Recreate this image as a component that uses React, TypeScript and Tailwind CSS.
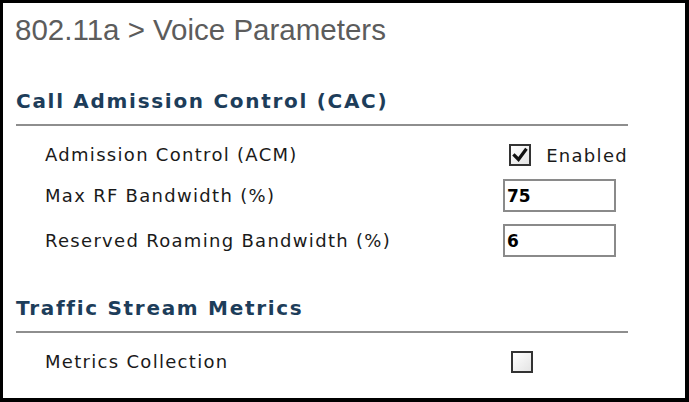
const heading = "font-['DejaVu_Sans',sans-serif] text-[20px] font-bold leading-[22px] tracking-[1.7px] text-[#1d3d5a]";
const label = "w-[458px] font-['DejaVu_Sans',sans-serif] text-[18px] leading-[22px] tracking-[1.3px] text-[#1a1a1a]";

function Box({ checked }: { checked?: boolean }) {
  return (
    <div className="ml-[8px] flex h-[22px] w-[22px] items-center justify-center border-2 border-[#333] bg-gradient-to-br from-white to-[#e4e4e4]">
      {checked && (
        <svg viewBox="0 0 16 16" className="h-[16px] w-[16px]">
          <path d="M2.5 8.5 L6.5 12.5 L13.5 3" fill="none" stroke="#111" strokeWidth="3.2" strokeLinecap="square" />
        </svg>
      )}
    </div>
  );
}

function Field({ value }: { value: string }) {
  return (
    <input
      readOnly
      value={value}
      className="h-[33px] w-[113px] border-2 border-[#8a8a8a] bg-white pl-[2px] font-['DejaVu_Sans',sans-serif] text-[17px] font-bold text-black outline-none"
    />
  );
}

export default function App() {
  return (
    <div className="h-[402px] w-[689px] border-t-[3px] border-r-4 border-b-4 border-l-[3px] border-black bg-white pt-[13px] pl-[13px]">
      <h1 className="-ml-px font-['Liberation_Sans',sans-serif] text-[29.5px] leading-[28px] text-[#5c5c5c]">
        802.11a &gt; Voice Parameters
      </h1>

      <section className="mt-[46px] w-[612px]">
        <h2 className={heading}>Call Admission Control (CAC)</h2>
        <div className="mt-[12px] h-[2px] bg-[#8e8e8e]" />

        <div className="mt-[18px] flex flex-col gap-[12px] pl-[29px]">
          <div className="flex h-[22px] items-center">
            <span className={label}>Admission Control (ACM)</span>
            <Box checked />
            <span className="ml-[15px] font-['DejaVu_Sans',sans-serif] text-[18px] tracking-[1.3px] text-[#1a1a1a]">Enabled</span>
          </div>
          <div className="mt-px flex h-[33px] items-center">
            <span className={label}>Max RF Bandwidth (%)</span>
            <Field value="75" />
          </div>
          <div className="flex h-[33px] items-center">
            <span className={label}>Reserved Roaming Bandwidth (%)</span>
            <Field value="6" />
          </div>
        </div>
      </section>

      <section className="mt-[40px] w-[612px]">
        <h2 className={heading}>Traffic Stream Metrics</h2>
        <div className="mt-[12px] h-[2px] bg-[#8e8e8e]" />
        <div className="mt-[18px] flex h-[22px] items-center pl-[29px]">
          <span className={label}>Metrics Collection</span>
          <Box />
        </div>
      </section>
    </div>
  );
}
